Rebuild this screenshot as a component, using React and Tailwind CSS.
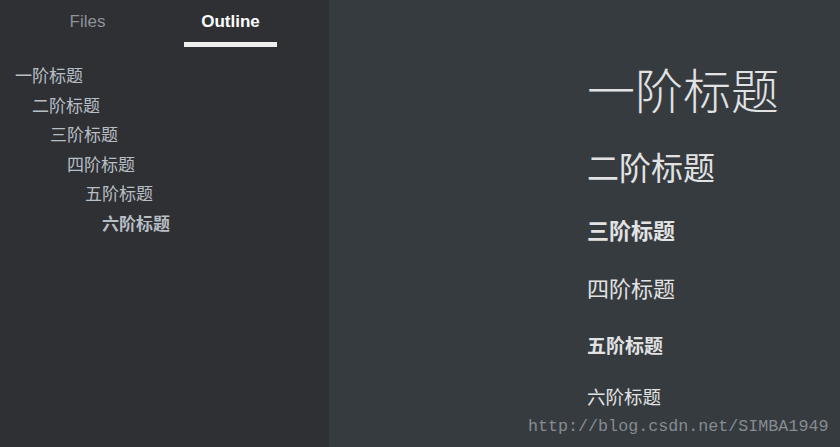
import React from 'react';

const outline = [
  { text: '一阶标题', indent: 'pl-[15px]' },
  { text: '二阶标题', indent: 'pl-[32px]' },
  { text: '三阶标题', indent: 'pl-[50px]' },
  { text: '四阶标题', indent: 'pl-[67px]' },
  { text: '五阶标题', indent: 'pl-[85px]' },
  { text: '六阶标题', indent: 'pl-[102px] font-bold' },
];

const cjk = { fontFamily: '"Noto Sans CJK SC", sans-serif' };

export default function App() {
  return (
    <div className="relative flex w-[840px] h-[447px] overflow-hidden">
      {/* sidebar */}
      <aside className="w-[329px] shrink-0 bg-[#2e3033]">
        <div className="flex h-[47px] pl-[16px]" style={{ fontFamily: '"Liberation Sans", Arial, sans-serif' }}>
          <div className="w-[143px] pt-[10px] text-center text-[17px] leading-[24px] text-[#8d939a]">Files</div>
          <div className="w-[143px] pt-[10px] flex flex-col items-center">
            <span className="text-[17px] leading-[24px] font-bold text-white">Outline</span>
            <span className="mt-[8px] w-[93px] h-[5px] bg-[#eeeeee]"></span>
          </div>
        </div>
        <ul className="pt-[13px]" style={cjk}>
          {outline.map((item) => (
            <li key={item.text} className={`${item.indent} text-[17px] leading-[29.6px] text-[#b8bec5]`}>
              {item.text}
            </li>
          ))}
        </ul>
      </aside>

      {/* editor */}
      <main className="flex-1 bg-[#363b40] pl-[258px] pt-[64px] text-[#e2e2e2]" style={cjk}>
        <h1 className="text-[48px] leading-[48px] font-light">一阶标题</h1>
        <h2 className="mt-[34px] text-[32px] leading-[40px] font-normal">二阶标题</h2>
        <h3 className="mt-[28px] text-[22px] leading-[30px] font-bold">三阶标题</h3>
        <h4 className="mt-[28px] text-[22px] leading-[30px] font-normal">四阶标题</h4>
        <h5 className="mt-[29px] text-[19px] leading-[28px] font-bold">五阶标题</h5>
        <h6 className="mt-[23px] text-[18.5px] leading-[28px] font-normal">六阶标题</h6>
      </main>

      <div
        className="absolute left-[528px] top-[416px] text-[16.7px] leading-[22px] text-[#868b91] whitespace-nowrap"
        style={{ fontFamily: '"Liberation Mono", "Courier New", monospace' }}
      >
        http://blog.csdn.net/SIMBA1949
      </div>
    </div>
  );
}
